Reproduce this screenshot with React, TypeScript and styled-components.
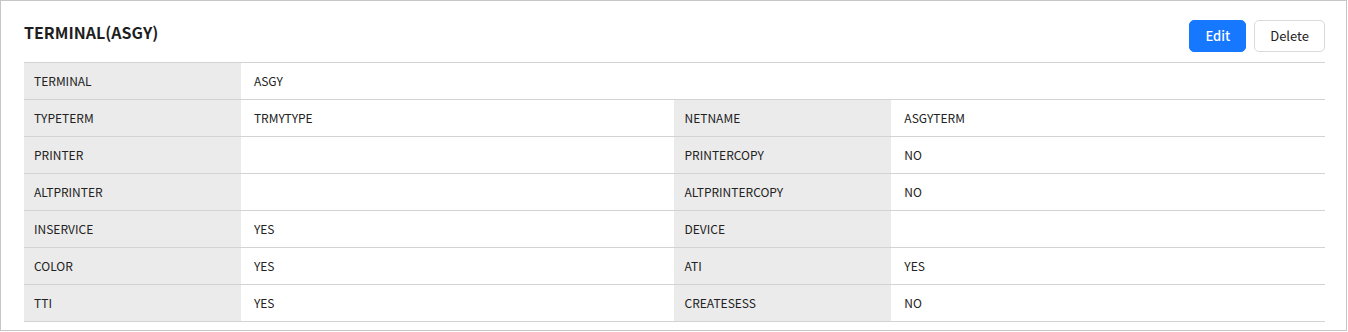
import styled, { createGlobalStyle } from 'styled-components';

const GlobalStyle = createGlobalStyle`
	body {
		margin: 0;
		background: #fff;
		font-family: 'Noto Sans CJK KR', 'Noto Sans', sans-serif;
		color: #222;
	}
`;

type Field = { label: string; value: string };

const terminal: Field = { label: 'TERMINAL', value: 'ASGY' };

const pairs: [Field, Field][] = [
	[
		{ label: 'TYPETERM', value: 'TRMYTYPE' },
		{ label: 'NETNAME', value: 'ASGYTERM' },
	],
	[
		{ label: 'PRINTER', value: '' },
		{ label: 'PRINTERCOPY', value: 'NO' },
	],
	[
		{ label: 'ALTPRINTER', value: '' },
		{ label: 'ALTPRINTERCOPY', value: 'NO' },
	],
	[
		{ label: 'INSERVICE', value: 'YES' },
		{ label: 'DEVICE', value: '' },
	],
	[
		{ label: 'COLOR', value: 'YES' },
		{ label: 'ATI', value: 'YES' },
	],
	[
		{ label: 'TTI', value: 'YES' },
		{ label: 'CREATESESS', value: 'NO' },
	],
];

const App = () => {
	return (
		<>
			<GlobalStyle />
			<Panel>
				<Header>
					<Title>
						{terminal.label}({terminal.value})
					</Title>
					<Actions>
						<Button $primary>Edit</Button>
						<Button>Delete</Button>
					</Actions>
				</Header>
				<Table>
					<colgroup>
						<col style={{ width: '16.67%' }} />
						<col style={{ width: '33.33%' }} />
						<col style={{ width: '16.67%' }} />
						<col style={{ width: '33.33%' }} />
					</colgroup>
					<tbody>
						<tr>
							<Label>{terminal.label}</Label>
							<Value colSpan={3}>{terminal.value}</Value>
						</tr>
						{pairs.map(([a, b]) => (
							<tr key={a.label}>
								<Label>{a.label}</Label>
								<Value>{a.value}</Value>
								<Label>{b.label}</Label>
								<Value>{b.value}</Value>
							</tr>
						))}
					</tbody>
				</Table>
			</Panel>
		</>
	);
};

const Panel = styled.div`
	width: 1347px;
	height: 331px;
	box-sizing: border-box;
	border: 1px solid #c6c6c6;
	padding: 19px 21px 0 23px;
`;

const Header = styled.div`
	display: flex;
	justify-content: space-between;
	align-items: flex-start;
	height: 32px;
	margin-bottom: 10px;
`;

const Title = styled.h2`
	margin: 0;
	font-size: 16px;
	line-height: 24px;
	font-weight: 700;
	color: #1e1e1e;
`;

const Actions = styled.div`
	display: flex;
	gap: 8px;
`;

const Button = styled.button<{ $primary?: boolean }>`
	height: 32px;
	padding: 0 15px 2px;
	box-sizing: border-box;
	border-radius: 5px;
	font-family: inherit;
	font-size: 13px;
	font-weight: ${(p) => (p.$primary ? 500 : 400)};
	cursor: pointer;
	border: 1px solid ${(p) => (p.$primary ? '#1677ff' : '#d9d9d9')};
	background: ${(p) => (p.$primary ? '#1677ff' : '#fff')};
	color: ${(p) => (p.$primary ? '#fff' : '#222')};
`;

const Table = styled.table`
	width: 100%;
	border-collapse: collapse;
	table-layout: fixed;
	border-top: 1px solid #d3d3d3;
	font-size: 12px;
`;

const Label = styled.td`
	height: 34px;
	padding: 0 10px 2px;
	background: #ebebeb;
	border-bottom: 1px solid #d3d3d3;
	color: #222;
`;

const Value = styled.td`
	height: 34px;
	padding: 0 13px 2px;
	background: #fff;
	border-bottom: 1px solid #d3d3d3;
	color: #222;
`;

export default App;
